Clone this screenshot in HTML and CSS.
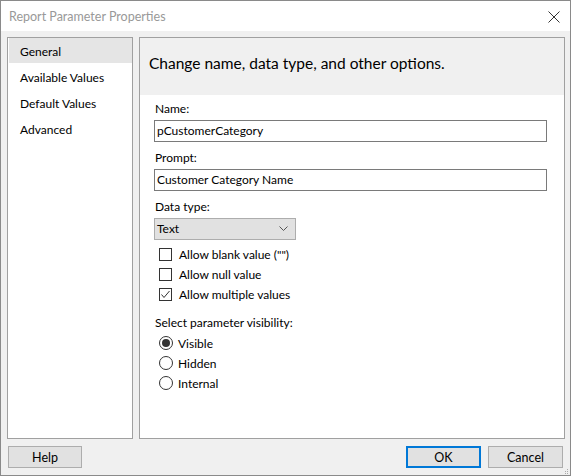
FILE: index.html
```html
<!DOCTYPE html>
<html>
<head>
<meta charset="utf-8">
<link rel="stylesheet" href="styles.css">
</head>
<body>
<div class="window">
  <div class="titlebar">
    <span class="title">Report Parameter Properties</span>
    <svg class="close" width="12" height="12" viewBox="0 0 12 12"><path d="M0.5 0.5 L11.5 11.5 M11.5 0.5 L0.5 11.5" stroke="#333" stroke-width="1" fill="none"/></svg>
  </div>
  <div class="main">
    <ul class="nav">
      <li class="active">General</li>
      <li>Available Values</li>
      <li>Default Values</li>
      <li>Advanced</li>
    </ul>
    <div class="panel">
      <div class="panel-header">Change name, data type, and other options.</div>
      <div class="form">
        <div class="field-label">Name:</div>
        <div class="textbox">pCustomerCategory</div>
        <div class="field-label">Prompt:</div>
        <div class="textbox">Customer Category Name</div>
        <div class="field-label">Data type:</div>
        <div class="select">
          <span>Text</span>
          <svg width="9" height="5" viewBox="0 0 9 5"><path d="M0.5 0.5 L4.5 4.5 L8.5 0.5" stroke="#555" stroke-width="1" fill="none"/></svg>
        </div>
        <div class="checks">
          <div class="check"><span class="box"></span><span>Allow blank value ("")</span></div>
          <div class="check"><span class="box"></span><span>Allow null value</span></div>
          <div class="check"><span class="box"><svg width="11" height="11" viewBox="0 0 11 11"><path d="M1.5 5.5 L4 8.5 L9.5 2" stroke="#333" stroke-width="1" fill="none"/></svg></span><span>Allow multiple values</span></div>
        </div>
        <div class="field-label vis-label">Select parameter visibility:</div>
        <div class="radios">
          <div class="radio"><span class="circle checked"></span><span>Visible</span></div>
          <div class="radio"><span class="circle"></span><span>Hidden</span></div>
          <div class="radio"><span class="circle"></span><span>Internal</span></div>
        </div>
      </div>
    </div>
  </div>
  <div class="footer">
    <button class="btn">Help</button>
    <div class="footer-right">
      <button class="btn primary">OK</button>
      <button class="btn">Cancel</button>
    </div>
    <svg class="grip" width="5" height="5" viewBox="0 0 5 5"><rect x="3" y="0" width="1" height="1" fill="#aaa"/><rect x="1" y="2" width="1" height="1" fill="#aaa"/><rect x="3" y="2" width="1" height="1" fill="#aaa"/><rect x="-1" y="4" width="1" height="1" fill="#aaa"/><rect x="1" y="4" width="1" height="1" fill="#aaa"/><rect x="3" y="4" width="1" height="1" fill="#aaa"/></svg>
  </div>
</div>
</body>
</html>
```
FILE: styles.css
```css
* { box-sizing: border-box; }
html, body { margin: 0; padding: 0; }
body {
  width: 571px;
  height: 476px;
  font-family: Lato, "Noto Sans", sans-serif;
  font-size: 12px;
  color: #000;
  background: #fff;
}
.window {
  width: 571px;
  height: 476px;
  border: 1px solid #8a8a8a;
  background: #f0f0f0;
  display: flex;
  flex-direction: column;
}
.titlebar {
  height: 30px;
  background: #fff;
  display: flex;
  align-items: center;
  padding-left: 8px;
  padding-right: 10px;
  justify-content: space-between;
}
.title {
  color: #999;
  font-size: 12.5px;
}
.close { margin-top: 1px; }
.main {
  height: 408px;
  display: flex;
  gap: 6px;
  padding: 6px 5px 0 6px;
}
.nav {
  list-style: none;
  margin: 0;
  padding: 0;
  width: 126px;
  background: #fff;
  border: 1px solid #a0a0a0;
}
.nav li {
  height: 26px;
  line-height: 26px;
  padding-left: 11px;
  padding-top: 1px;
  margin-left: 1px;
}
.nav li.active {
  background: #e5e5e5;
  height: 25px;
  line-height: 25px;
  margin-bottom: 1px;
}
.panel {
  flex: 1;
  background: #fff;
  border: 1px solid #a0a0a0;
  display: flex;
  flex-direction: column;
}
.panel-header {
  height: 57px;
  background: #f0f0f0;
  font-size: 15.5px;
  padding-left: 9px;
  display: flex;
  align-items: center;
  padding-bottom: 8px;
}
.form {
  padding: 6px 17px 0 14px;
}
.field-label {
  height: 16px;
  line-height: 16px;
  padding-left: 1px;
  margin-bottom: 3px;
}
.textbox {
  height: 22px;
  border: 1px solid #7a7a7a;
  line-height: 19px;
  padding-left: 2px;
  margin-bottom: 8px;
}
.select {
  width: 142px;
  height: 22px;
  background: #e1e1e1;
  border: 1px solid #adadad;
  display: flex;
  align-items: center;
  justify-content: space-between;
  padding: 0 7px 1px 2px;
}
.checks {
  margin-top: 4px;
  padding-left: 5px;
}
.check, .radio {
  height: 20px;
  display: flex;
  align-items: center;
}
.box {
  width: 13px;
  height: 13px;
  border: 1px solid #333;
  margin-right: 7px;
  display: flex;
  align-items: center;
  justify-content: center;
  background: #fff;
}
.vis-label {
  margin-top: 11px;
  margin-bottom: 2px;
}
.radios { padding-left: 5px; }
.circle {
  width: 14px;
  height: 14px;
  border: 1px solid #333;
  border-radius: 50%;
  margin-right: 5px;
  display: flex;
  align-items: center;
  justify-content: center;
  background: #fff;
}
.circle.checked::after {
  content: "";
  width: 8px;
  height: 8px;
  border-radius: 50%;
  background: #333;
}
.footer {
  flex: 1;
  display: flex;
  justify-content: space-between;
  align-items: flex-start;
  padding: 7px 7px 0 7px;
  position: relative;
}
.footer-right {
  display: flex;
  gap: 7px;
}
.btn {
  width: 74px;
  height: 22px;
  background: #e1e1e1;
  border: 1px solid #adadad;
  font-family: inherit;
  font-size: 12.5px;
  color: #000;
  padding: 0;
  margin: 0;
}
.footer-right .btn { width: 75px; }
.btn.primary {
  border: 2px solid #0078d7;
}
.grip {
  position: absolute;
  right: 1px;
  bottom: 1px;
}
```
